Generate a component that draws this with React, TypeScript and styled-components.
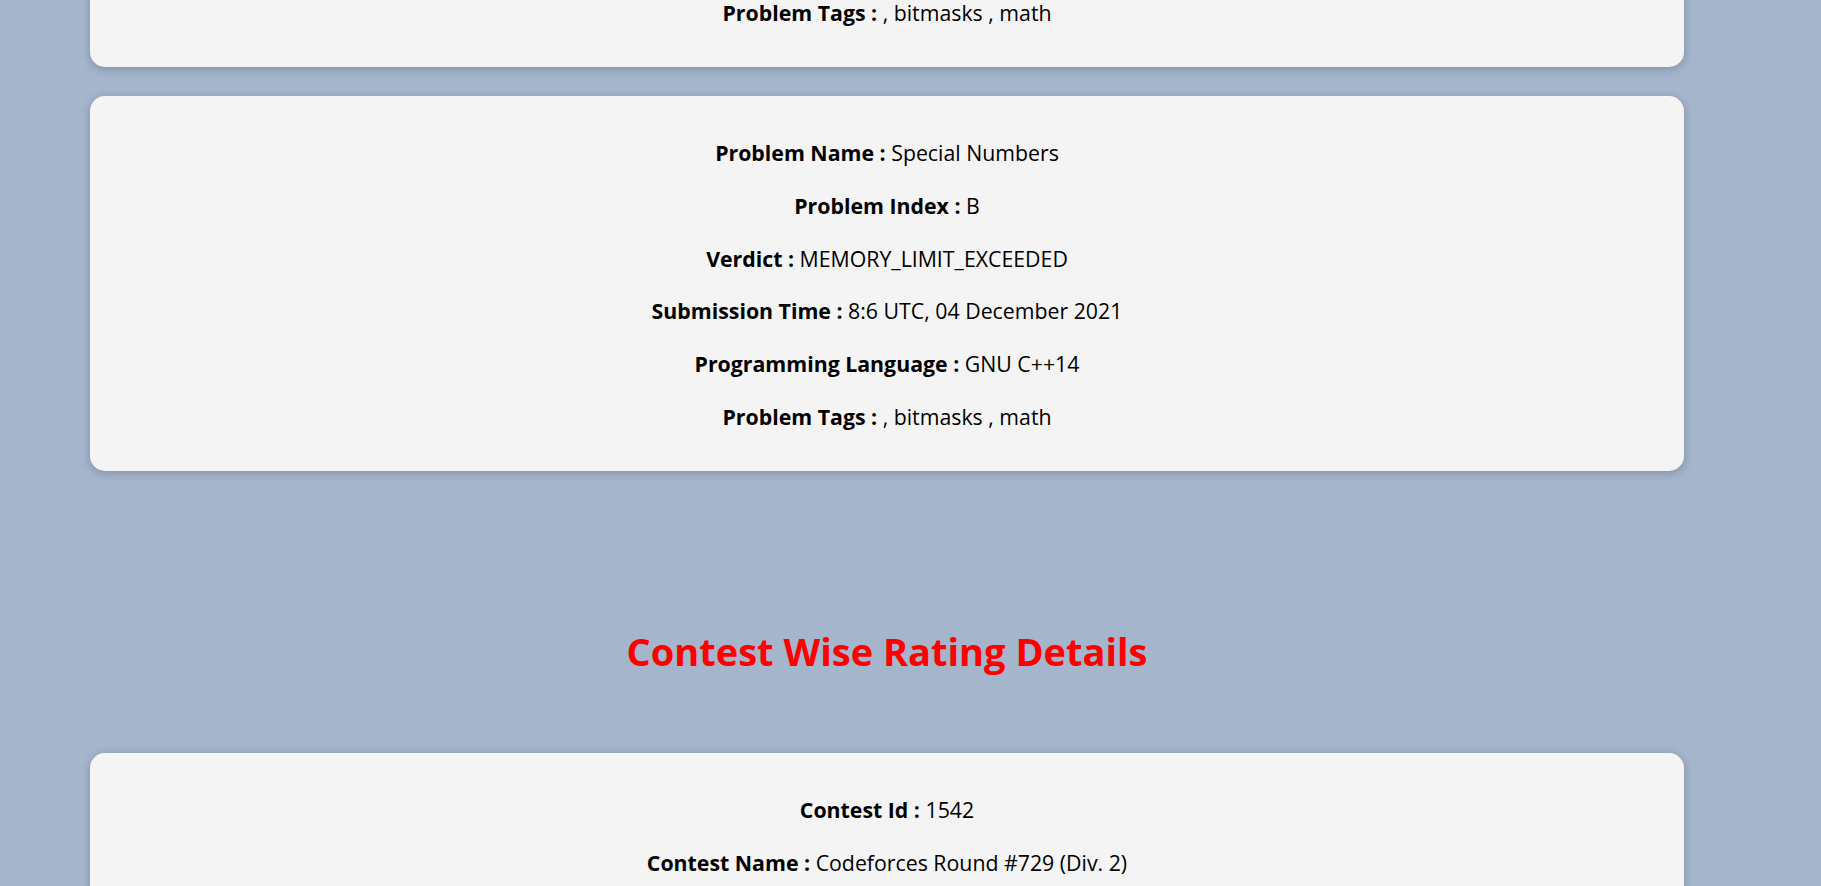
import React from "react";
import styled, { createGlobalStyle } from "styled-components";

const GlobalStyle = createGlobalStyle`
  html, body {
    margin: 0;
    padding: 0;
    background: #a4b5cc;
    overflow: hidden;
  }
  body {
    font-family: "Open Sans", "Noto Sans", sans-serif;
    color: #000;
  }
`;

const Page = styled.div`
  width: 1821px;
  height: 886px;
  overflow: hidden;
  background: #a4b5cc;
`;

const Scroller = styled.div<{ $offset: number }>`
  display: flex;
  flex-direction: column;
  padding: 0 137px 0 90px;
  margin-top: ${(p) => -p.$offset}px;
`;

const Card = styled.section`
  background: #f4f4f4;
  border-radius: 15px;
  box-shadow: 0 2px 10px rgba(0, 0, 0, 0.22);
  padding: 42px 20px 39px;
  display: flex;
  flex-direction: column;
  align-items: center;
  gap: 22.8px;
  & + & {
    margin-top: 29px;
  }
`;

const Row = styled.p`
  margin: 0;
  font-size: 21.3px;
  line-height: 30px;
  text-align: center;
`;

const Label = styled.b`
  font-weight: 700;
`;

const SectionTitle = styled.h2`
  margin: 156px 0 78px;
  text-align: center;
  color: #ff0000;
  font-size: 38px;
  line-height: 48px;
  font-weight: 700;
`;

type Field = [string, string];

const submissions: Field[][] = [
  [
    ["Problem Name", "Special Numbers"],
    ["Problem Index", "B"],
    ["Verdict", "MEMORY_LIMIT_EXCEEDED"],
    ["Submission Time", "8:6 UTC, 04 December 2021"],
    ["Programming Language", "GNU C++14"],
    ["Problem Tags", ", bitmasks , math"],
  ],
  [
    ["Problem Name", "Special Numbers"],
    ["Problem Index", "B"],
    ["Verdict", "MEMORY_LIMIT_EXCEEDED"],
    ["Submission Time", "8:6 UTC, 04 December 2021"],
    ["Programming Language", "GNU C++14"],
    ["Problem Tags", ", bitmasks , math"],
  ],
];

const contests: Field[][] = [
  [
    ["Contest Id", "1542"],
    ["Contest Name", "Codeforces Round #729 (Div. 2)"],
    ["Rank", "5432"],
    ["Old Rating", "1200"],
    ["New Rating", "1250"],
  ],
];

const InfoCard = ({ fields }: { fields: Field[] }) => (
  <Card>
    {fields.map(([k, v], i) => (
      <Row key={i}>
        <Label>{k} :</Label> {v}
      </Row>
    ))}
  </Card>
);

export default function App() {
  return (
    <Page>
      <GlobalStyle />
      <Scroller $offset={308}>
        {submissions.map((f, i) => (
          <InfoCard key={i} fields={f} />
        ))}
        <SectionTitle>Contest Wise Rating Details</SectionTitle>
        {contests.map((f, i) => (
          <InfoCard key={i} fields={f} />
        ))}
      </Scroller>
    </Page>
  );
}
